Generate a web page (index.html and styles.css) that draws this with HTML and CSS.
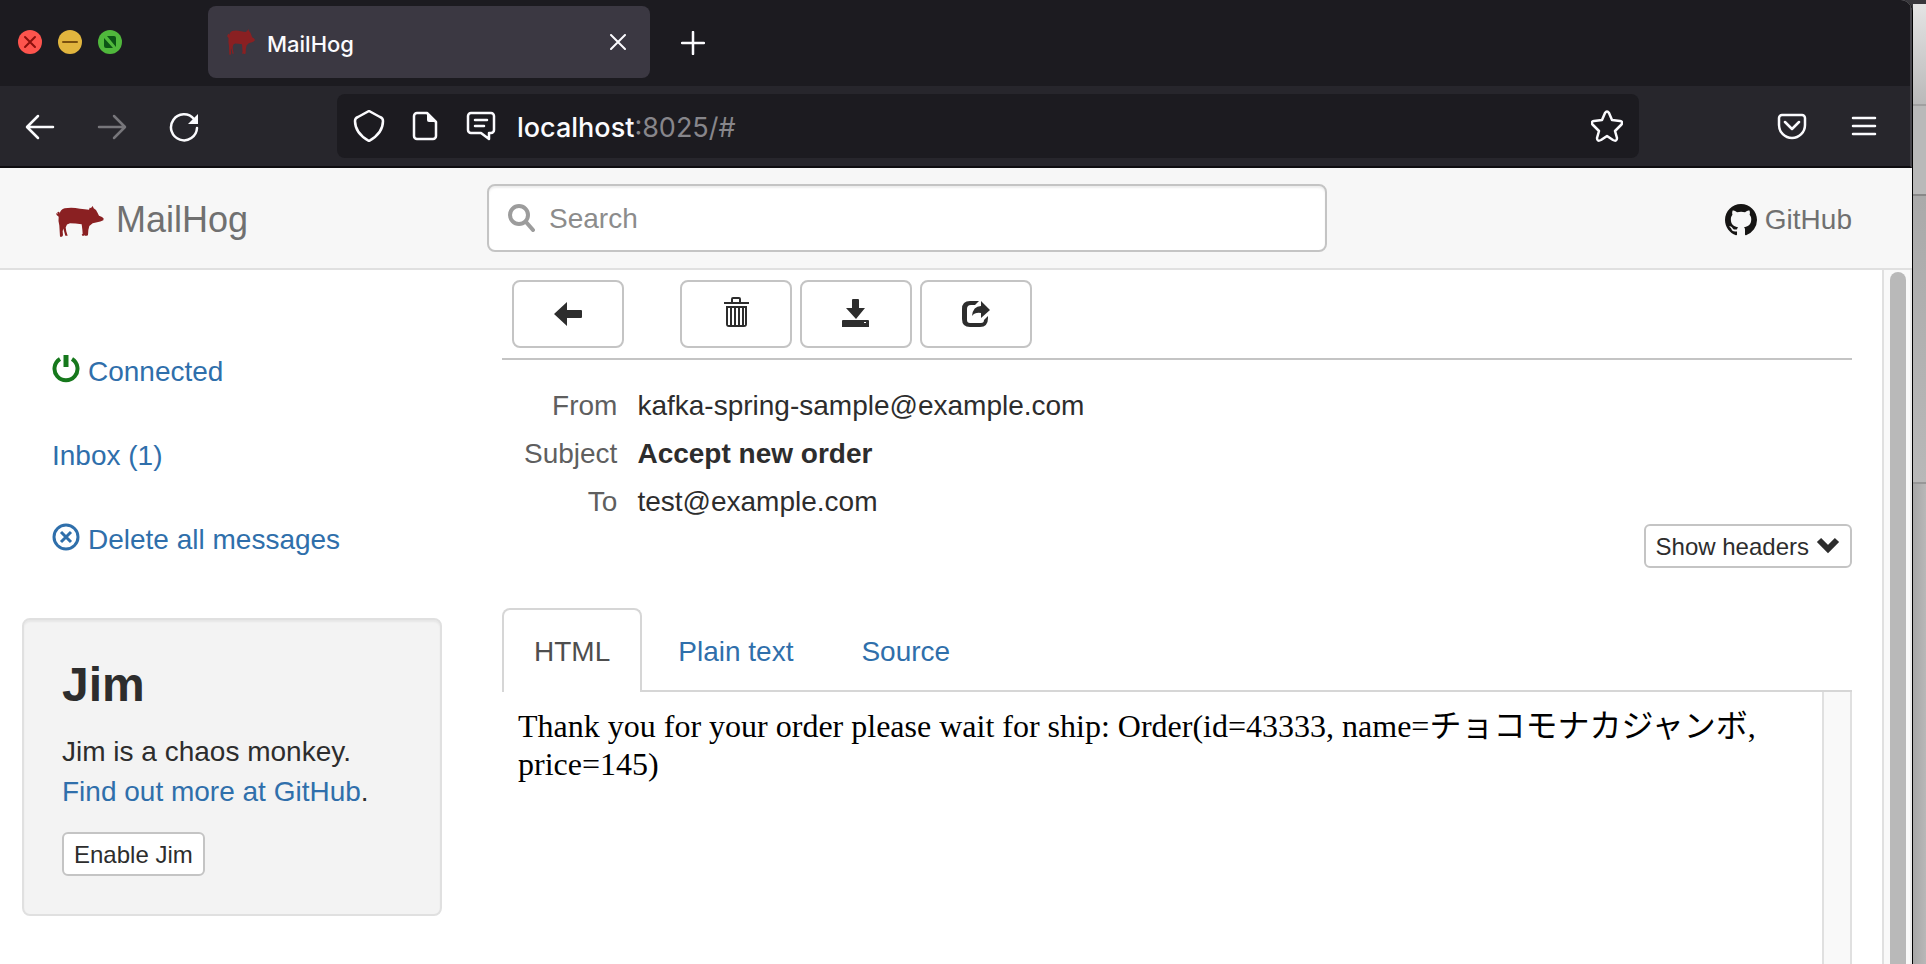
FILE: index.html
```html
<!DOCTYPE html>
<html lang="en">
<head>
    <meta charset="UTF-8">
    <meta name="viewport" content="width=device-width, initial-scale=1.0">
    <title>MailHog</title>
    <link rel="stylesheet" href="styles.css">
</head>
<body>
    <!-- shared pig logo -->
    <svg class="hidden">
        <symbol id="pig" viewBox="18 33 144 92" preserveAspectRatio="none">
            <path d="M161 70L160 75L151 79L138 82L128 84L118 92L115 104L114 120L107 122L104 119L103 121L97 121L95 118L98 115L97 103L95 87Q76 84 60 84L51 88L47 97L49 109L53 121L46 121L42 107L40 100L38 108L39 120L36 124L30 124L29 107L28 91Q24 77 26 65L20 60L18 54L23 57L22 52Q25 48 29 52L29 56Q31 44 44 40Q65 36 90 41Q105 43 117 44L119 38L123 39L128 33L131 40L138 45L143 54L147 62L156 66Z"/>
        </symbol>
    </svg>

    <div class="window">
        <div class="tab-bar">
            <div class="lights">
                <button class="light light-red" aria-label="Close window"><svg viewBox="0 0 24 24"><path d="M7 7l10 10M17 7L7 17"/></svg></button>
                <button class="light light-yellow" aria-label="Minimize"><svg viewBox="0 0 24 24"><path d="M5 12h14"/></svg></button>
                <button class="light light-green" aria-label="Zoom"><svg viewBox="0 0 24 24"><path class="solid" d="M9 6h7a2 2 0 0 1 2 2v9zM6 8v8a2 2 0 0 0 2 2h7z"/></svg></button>
            </div>
            <div class="tab">
                <svg class="favicon"><use href="#pig"/></svg>
                <span class="tab-title">MailHog</span>
                <button class="tab-close" aria-label="Close tab"><svg viewBox="0 0 16 16"><path d="M1 1l14 14M15 1L1 15"/></svg></button>
            </div>
            <button class="new-tab" aria-label="New tab"><svg viewBox="0 0 24 24"><path d="M12 1v22M1 12h22"/></svg></button>
        </div>

        <div class="nav-bar">
            <div class="nav-buttons">
                <button aria-label="Back"><svg viewBox="0 0 32 32"><path d="M29 16H4M14 5L3 16l11 11"/></svg></button>
                <button class="dim" aria-label="Forward"><svg viewBox="0 0 32 32"><path d="M3 16h25M18 5l11 11-11 11"/></svg></button>
                <button aria-label="Reload"><svg viewBox="0 0 32 32"><path d="M29 17A13 13 0 1 1 26 8"/><path class="solid" d="M30 3v10H20z"/></svg></button>
            </div>
            <div class="url-bar">
                <svg viewBox="0 0 32 32"><path d="M16 1l11 6q3 1 3 4c0 9-5 15-14 20C7 26 2 20 2 11q0-3 3-4z"/></svg>
                <svg viewBox="0 0 32 32"><path d="M18 3H8a3 3 0 0 0-3 3v20a3 3 0 0 0 3 3h16a3 3 0 0 0 3-3V12z"/><path class="solid" d="M18 2v8q0 2 2 2h8z"/></svg>
                <svg viewBox="0 0 32 32"><path d="M6 3h20a3 3 0 0 1 3 3v14a3 3 0 0 1-3 3h-2v6l-8-6H6a3 3 0 0 1-3-3V6a3 3 0 0 1 3-3zM10 10h12M10 16h9"/></svg>
                <div class="url"><span>localhost</span>:8025/#</div>
                <button class="star" aria-label="Bookmark"><svg viewBox="0 0 32 32"><path d="M14 3q2-3 4 0l3 7 8 1q4 1 1 4l-6 6 2 7q0 4-4 2l-6-4-6 4q-4 2-4-2l2-7-6-6q-3-3 1-4l8-1z"/></svg></button>
            </div>
            <div class="nav-end">
                <button aria-label="Pocket"><svg viewBox="0 0 32 32"><path d="M6 4h20a3 3 0 0 1 3 3v7a13 13 0 0 1-26 0V7a3 3 0 0 1 3-3zM9 11l7 7 7-7"/></svg></button>
                <button aria-label="Menu"><svg viewBox="0 0 32 32"><path d="M5 7h22M5 15h22M5 23h22"/></svg></button>
            </div>
        </div>

        <header class="header">
            <a class="brand" href="#"><svg class="brand-pig"><use href="#pig"/></svg>MailHog</a>
            <div class="search">
                <svg viewBox="0 0 28 28"><circle cx="12" cy="11" r="9"/><path d="M19 18l7 8"/></svg>
                <input type="text" placeholder="Search" aria-label="Search">
            </div>
            <a class="github" href="#">
                <svg viewBox="0 0 16 16"><path d="M8 0C3.580 0 0 3.580 0 8c0 3.540 2.290 6.530 5.470 7.590.4.070.550-.170.550-.380 0-.190-.010-.820-.010-1.490-2.010.370-2.530-.490-2.690-.940-.090-.230-.480-.940-.820-1.130-.280-.150-.680-.520-.010-.530.630-.010 1.080.580 1.230.820.720 1.210 1.870.870 2.330.660.070-.520.280-.870.510-1.070-1.780-.2-3.640-.890-3.640-3.950 0-.870.310-1.590.820-2.150-.080-.2-.360-1.020.080-2.120 0 0 .670-.210 2.200.820.640-.180 1.320-.270 2-.270s1.360.090 2 .270c1.530-1.040 2.200-.820 2.200-.820.440 1.100.160 1.920.080 2.120.510.560.820 1.270.820 2.150 0 3.070-1.870 3.750-3.650 3.950.290.250.540.730.540 1.480 0 1.070-.010 1.930-.010 2.200 0 .210.150.460.550.380A8.010 8.010 0 0 0 16 8c0-4.420-3.580-8-8-8z"/></svg>
                GitHub
            </a>
        </header>

        <div class="page">
            <div class="container">
                <aside class="sidebar">
                    <ul class="menu">
                        <li><a href="#"><svg class="power" viewBox="0 0 28 28"><path d="M8 4a11.500 11.500 0 1 0 12 0"/><path class="bar" d="M14 0v12"/></svg>Connected</a></li>
                        <li><a href="#">Inbox (1)</a></li>
                        <li><a href="#"><svg class="remove" viewBox="0 0 28 28"><circle cx="14" cy="14" r="12"/><path d="M9 9l10 10M19 9L9 19"/></svg>Delete all messages</a></li>
                    </ul>
                    <div class="well">
                        <h3>Jim</h3>
                        <p>Jim is a chaos monkey.<br><a href="#">Find out more at GitHub</a>.</p>
                        <button class="btn btn-small">Enable Jim</button>
                    </div>
                </aside>

                <main class="content">
                    <div class="toolbar">
                        <button class="btn btn-icon btn-back" aria-label="Back to inbox"><svg viewBox="0 0 28 32"><path d="M0 18L13 6v8h14q1 0 1 1v6q0 1-1 1H13v8z"/></svg></button>
                        <button class="btn btn-icon" aria-label="Delete"><svg viewBox="0 0 28 32"><path fill-rule="evenodd" d="M2 6h7V3q0-2 2-2h6q2 0 2 2v3h8v2H2zM11 6h6V3h-6zM4 10h21v18q0 3-3 3H7q-3 0-3-3zM6 12v17h2V12zM10 12v17h2V12zM14 12v17h2V12zM18 12v17h2V12zM22 12v17h1V12z"/></svg></button>
                        <button class="btn btn-icon" aria-label="Download"><svg viewBox="0 0 28 32"><path fill-rule="evenodd" d="M10 4q0-1 1-1h5q1 0 1 1v8h6l-9 11L4 12h6zM1 24h25q1 0 1 1v6H0v-6q0-1 1-1zM22 26v1h2v-1z"/></svg></button>
                        <button class="btn btn-icon" aria-label="Release"><svg viewBox="0 0 28 32"><path d="M17 5H8Q0 5 0 13v10q0 8 8 8h10q8 0 8-9v-2l-4 4q0 3-3 3H8q-3 0-3-3V13q0-4 4-4h4z"/><path d="M10 20q1-10 9-10V5l9 9-9 8v-5q-6-1-9 3z"/></svg></button>
                    </div>

                    <table class="fields">
                        <tr><th>From</th><td>kafka-spring-sample@example.com</td></tr>
                        <tr><th>Subject</th><td><strong>Accept new order</strong></td></tr>
                        <tr><th>To</th><td>test@example.com</td></tr>
                    </table>

                    <button class="btn btn-small show-headers">Show headers <svg viewBox="0 0 24 24"><path d="M3 7l9 9 9-9"/></svg></button>

                    <nav class="tabs">
                        <a class="active" href="#">HTML</a>
                        <a href="#">Plain text</a>
                        <a href="#">Source</a>
                    </nav>

                    <div class="preview">
                        <p>Thank you for your order please wait for ship: Order(id=43333, name=チョコモナカジャンボ, price=145)</p>
                        <div class="preview-scroll"></div>
                    </div>
                </main>
            </div>
            <div class="page-scroll"><div class="thumb"></div></div>
        </div>
    </div>

    <!-- strip of the window behind -->
    <div class="backdrop">
        <div class="back-top"></div>
        <div class="back-tools"></div>
        <div class="back-panel"></div>
        <div class="back-rest"></div>
    </div>
</body>
</html>
```

FILE: styles.css
```css
:root {
    --chrome-dark: #1c1b20;
    --chrome: #27262c;
    --chrome-text: #fbfbfe;
    --link: #2f6fab;
    --text: #2d2d2d;
    --muted: #707070;
    --border: #c4c4c4;
    --line: #e0e0e0;
}

* {
    margin: 0;
    padding: 0;
    box-sizing: border-box;
}

body {
    display: flex;
    height: 100vh;
    overflow: hidden;
    background-color: #37363b;
    font-family: "Liberation Sans", Arial, sans-serif;
    font-size: 28px;
    line-height: 40px;
    color: var(--text);
}

a {
    color: var(--link);
    text-decoration: none;
}

button {
    background: none;
    border: none;
    font-family: inherit;
    color: inherit;
    cursor: pointer;
}

svg {
    display: block;
    flex-shrink: 0;
}

.hidden {
    display: none;
}

.window {
    flex: 1;
    min-width: 0;
    display: flex;
    flex-direction: column;
    border-right: 1px solid #000;
    border-top-right-radius: 12px;
    overflow: hidden;
    background-color: #fff;
}

/* browser chrome */
.tab-bar, .nav-bar {
    display: flex;
    align-items: center;
    border-right: 2px solid #46454b;
    color: var(--chrome-text);
    font-family: Inter, sans-serif;
    font-weight: 500;
}

.tab-bar {
    height: 86px;
    padding: 0 18px 2px;
    background-color: var(--chrome-dark);
}

.tab-bar svg, .nav-bar svg {
    fill: none;
    stroke: currentColor;
    stroke-width: 2;
    stroke-linecap: round;
    stroke-linejoin: round;
}

.nav-bar svg {
    width: 32px;
    height: 32px;
    stroke-width: 2.5;
}

.tab-bar .solid, .nav-bar .solid {
    fill: currentColor;
    stroke: none;
}

.lights {
    display: flex;
    gap: 16px;
    margin-right: 86px;
}

.light {
    width: 24px;
    height: 24px;
    border-radius: 50%;
}

.light-red {
    background-color: #fd544d;
    color: #8c0f0c;
}

.light-yellow {
    background-color: #e1b53e;
    color: #79500f;
}

.light-green {
    background-color: #50b83c;
    color: #0b5415;
}

.tab {
    display: flex;
    align-items: center;
    width: 442px;
    height: 72px;
    padding: 0 24px 0 19px;
    border-radius: 8px;
    background-color: #3b3842;
    font-size: 22px;
}

.tab .favicon {
    width: 28px;
    height: 26px;
    margin-right: 12px;
    fill: #8a2022;
    stroke: none;
}

.tab-title {
    flex: 1;
    padding-top: 4px;
}

.tab-close svg {
    width: 16px;
    height: 16px;
}

.new-tab {
    margin: 2px 0 0 31px;
}

.new-tab svg {
    width: 24px;
    height: 24px;
    stroke-width: 2.5;
}

.nav-bar {
    height: 82px;
    padding: 2px 30px 0 24px;
    background-color: var(--chrome);
    border-bottom: 2px solid #0e0d10;
}

.nav-buttons {
    display: flex;
    gap: 40px;
    margin-right: 137px;
}

.dim {
    color: #77767b;
}

.url-bar {
    flex: 1;
    display: flex;
    align-items: center;
    gap: 24px;
    height: 64px;
    margin-bottom: 2px;
    padding: 0 16px;
    border-radius: 8px;
    background-color: var(--chrome-dark);
}

.url {
    flex: 1;
    margin-left: -4px;
    padding-top: 4px;
    font-size: 27px;
    font-weight: 400;
    color: #87868b;
}

.url span {
    font-weight: 500;
    color: var(--chrome-text);
}

.nav-end {
    display: flex;
    gap: 40px;
    margin-left: 137px;
}

/* MailHog header */
.header {
    display: flex;
    align-items: center;
    height: 102px;
    padding-right: 60px;
    background-color: #f7f7f7;
    border-bottom: 2px solid var(--line);
}

.brand {
    display: flex;
    align-items: center;
    gap: 12px;
    width: 487px;
    padding: 4px 0 0 56px;
    font-size: 36px;
    color: var(--muted);
}

.brand-pig {
    width: 48px;
    height: 31px;
    margin-top: 2px;
    fill: #8a2022;
}

.search {
    flex: 1;
    display: flex;
    align-items: center;
    gap: 14px;
    height: 68px;
    max-width: 840px;
    padding: 0 18px;
    border: 2px solid var(--border);
    border-radius: 8px;
    background-color: #fff;
    box-shadow: inset 0 2px 2px rgba(0, 0, 0, 0.07);
}

.search svg {
    width: 28px;
    height: 28px;
    fill: none;
    stroke: #9c9c9c;
    stroke-width: 4;
    stroke-linecap: round;
}

.search input {
    flex: 1;
    min-width: 0;
    padding-top: 2px;
    border: none;
    outline: none;
    background: none;
    font-family: inherit;
    font-size: 28px;
}

.search input::placeholder {
    color: #8c8c8c;
}

.github {
    display: flex;
    align-items: center;
    gap: 8px;
    margin-left: auto;
    padding-top: 4px;
    color: var(--muted);
}

.github svg {
    width: 32px;
    height: 32px;
    fill: #161514;
}

/* page body */
.page {
    flex: 1;
    min-height: 0;
    display: flex;
}

.container {
    flex: 1;
    min-width: 0;
    display: flex;
    gap: 60px;
    padding: 0 30px 0 22px;
}

.sidebar {
    width: 420px;
    padding-top: 60px;
}

.menu {
    list-style: none;
    margin-bottom: 36px;
}

.menu a {
    display: flex;
    align-items: center;
    gap: 8px;
    height: 84px;
    padding-left: 30px;
}

.menu svg {
    width: 28px;
    height: 28px;
    margin-bottom: 6px;
    fill: none;
    stroke: currentColor;
    stroke-width: 3;
}

.menu .power {
    color: #16781c;
    stroke-width: 4;
}

.menu .bar {
    stroke-width: 5;
}

.well {
    padding: 38px;
    border: 2px solid var(--line);
    border-radius: 8px;
    background-color: #f3f3f3;
    box-shadow: inset 0 2px 2px rgba(0, 0, 0, 0.05);
}

.well h3 {
    font-size: 48px;
    line-height: 54px;
    margin-bottom: 20px;
}

.well p {
    margin-bottom: 20px;
}

.btn {
    border: 2px solid var(--border);
    border-radius: 8px;
    background-color: #fff;
    color: var(--text);
}

.btn-small {
    display: flex;
    align-items: center;
    gap: 7px;
    height: 44px;
    padding: 1px 10px 0;
    border-radius: 6px;
    font-size: 24px;
}

.content {
    flex: 1;
    min-width: 0;
    display: flex;
    flex-direction: column;
}

.toolbar {
    display: flex;
    gap: 8px;
    padding: 10px;
    border-bottom: 2px solid var(--border);
}

.btn-icon {
    display: flex;
    justify-content: center;
    width: 112px;
    height: 68px;
    padding-top: 14px;
}

.btn-icon svg {
    width: 28px;
    height: 32px;
    fill: currentColor;
}

.btn-back {
    margin-right: 48px;
}

.fields {
    align-self: flex-start;
    margin: 20px 0 0 10px;
    border-collapse: collapse;
}

.fields th, .fields td {
    padding: 6px 10px 2px;
    text-align: left;
}

.fields th {
    padding-left: 12px;
    font-weight: normal;
    text-align: right;
    color: #5f5f5f;
}

.show-headers {
    align-self: flex-end;
}

.show-headers svg {
    width: 24px;
    height: 24px;
    margin-bottom: 4px;
    fill: none;
    stroke: currentColor;
    stroke-width: 6;
}

.tabs {
    display: flex;
    gap: 4px;
    margin-top: 40px;
    border-bottom: 2px solid #d6d6d6;
}

.tabs a {
    margin-bottom: -2px;
    padding: 21px 30px 19px;
    border: 2px solid transparent;
    border-bottom: none;
    line-height: 42px;
}

.tabs .active {
    border-color: #d6d6d6;
    border-radius: 8px 8px 0 0;
    background-color: #fff;
    color: #4e4e4e;
}

.preview {
    flex: 1;
    display: flex;
    border-right: 2px solid var(--line);
    font-family: "Liberation Serif", "Noto Sans CJK JP", serif;
    font-size: 32px;
    line-height: 38px;
    color: #000;
}

.preview p {
    flex: 1;
    padding: 15px 16px;
}

.preview-scroll {
    width: 28px;
    border-left: 2px solid var(--line);
    background-color: #f9f9f9;
}

.page-scroll {
    width: 30px;
    padding: 2px 4px 0 6px;
    border-left: 2px solid var(--line);
    border-right: 2px solid #ececec;
    background-color: #f9f9f9;
}

.thumb {
    width: 16px;
    height: 100%;
    border-radius: 8px 8px 0 0;
    background-color: #b9b9b9;
}

.backdrop {
    display: flex;
    flex-direction: column;
    width: 13px;
    border-top: 4px solid #37363b;
    background-color: #b4b4b4;
}

.back-top {
    height: 102px;
    background: linear-gradient(#e4e4e4, #b9b9b9);
    border-bottom: 2px solid #a0a0a0;
}

.back-tools {
    height: 90px;
    background-color: #b9b9b9;
    border-bottom: 2px solid #888;
}

.back-panel {
    height: 288px;
    background: linear-gradient(#aaa, #b8b8b8);
    border-bottom: 2px solid #979797;
}

.back-rest {
    flex: 1;
    background: linear-gradient(90deg, #a6a6a6, #b8b8b8);
}
```
